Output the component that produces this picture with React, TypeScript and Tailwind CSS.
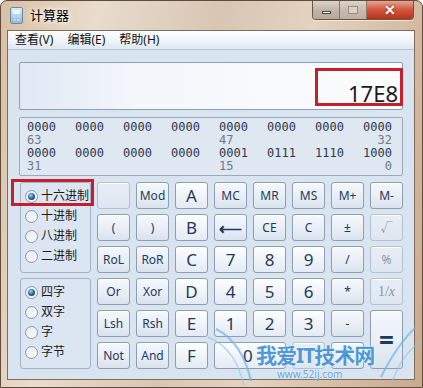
import React from "react";

type Kind = "op" | "num" | "off";

const FONT = "font-['Noto_Sans','Noto_Sans_CJK_SC',sans-serif]";

function Key({
	label,
	kind = "op",
	className = "",
}: {
	label: React.ReactNode;
	kind?: Kind;
	className?: string;
}) {
	const look =
		kind === "num"
			? "bg-[linear-gradient(to_bottom,#fdfeff,#f0f4f9_50%,#e4ebf4)] border-[#8e9db2] text-[17px] text-[#1e395b]"
			: kind === "off"
				? "bg-[linear-gradient(to_bottom,#e8eef6,#dde6f0)] border-[#b3c1d2] text-[12px] text-[#8795a8]"
				: "bg-[linear-gradient(to_bottom,#f5f8fc,#e9eff6_50%,#d9e3ee)] border-[#8e9db2] text-[12px] text-[#1e395b]";
	return (
		<div
			className={`flex items-center justify-center rounded-[3px] border leading-none shadow-[inset_0_1px_0_#ffffff] ${look} ${className}`}
		>
			{label}
		</div>
	);
}

function Radio({ label, on = false }: { label: string; on?: boolean }) {
	return (
		<div className="flex h-[20px] items-center gap-[3px] pl-[4px]">
			<span className="flex size-[13px] shrink-0 items-center justify-center rounded-full border border-[#8a99ac] bg-[linear-gradient(135deg,#e6e9ee,#fcfcfd)]">
				{on && (
					<span className="size-[7px] rounded-full bg-[radial-gradient(circle_at_40%_35%,#9ad6f7,#1f5f93_55%,#0c2f52)]" />
				)}
			</span>
			<span className="whitespace-nowrap text-[12px] leading-none text-[#1b1b1b]">{label}</span>
		</div>
	);
}

function RadioGroup({ items, className = "" }: { items: [string, boolean][]; className?: string }) {
	return (
		<div
			className={`flex flex-col justify-center rounded-[3px] border border-[#a3b2c6] bg-[#dce6f2] pb-[3px] ${className}`}
		>
			{items.map(([t, on]) => (
				<Radio key={t} label={t} on={on} />
			))}
		</div>
	);
}

function Bits() {
	const rows = [
		[["0000", "0000", "0000", "0000", "0000", "0000", "0000", "0000"], ["63", "", "", "", "47", "", "", "32"]],
		[["0000", "0000", "0000", "0000", "0001", "0111", "1110", "1000"], ["31", "", "", "", "15", "", "", "0"]],
	];
	return (
		<div className="mt-[7px] h-[59px] rounded-[2px] border border-[#9aa9bd] bg-[#dfe7f1] pl-[7px] pr-[10px] pt-[3px] font-['DejaVu_Sans_Mono',monospace] text-[12px] leading-[13px]">
			{rows.map(([bits, labels], r) => (
				<div key={r}>
					<div className="flex justify-between text-[#2b3a4c]">
						{bits.map((b, i) => (
							<span key={i} className="w-[29px]">
								{b}
							</span>
						))}
					</div>
					<div className="flex justify-between text-[#6f7986]">
						{labels.map((b, i) => (
							<span key={i} className={`w-[29px] ${i === 7 ? "text-right" : ""}`}>
								{b}
							</span>
						))}
					</div>
				</div>
			))}
		</div>
	);
}

function Keys() {
	return (
		<div className="mt-[6px] grid grid-cols-[72px_repeat(8,33px)] grid-rows-[repeat(6,27px)] gap-x-[6px] gap-y-[5px]">
			<RadioGroup
				className="row-span-3 ml-px"
				items={[
					["十六进制", true],
					["十进制", false],
					["八进制", false],
					["二进制", false],
				]}
			/>
			<Key label="" kind="off" />
			<Key label="Mod" />
			<Key label="A" kind="num" />
			<Key label="MC" />
			<Key label="MR" />
			<Key label="MS" />
			<Key label="M+" />
			<Key label="M-" />

			<Key label="(" />
			<Key label=")" />
			<Key label="B" kind="num" />
			<Key label={<span className="text-[16px] font-bold">⟵</span>} />
			<Key label="CE" />
			<Key label="C" />
			<Key label="±" />
			<Key label="√" kind="off" />

			<Key label="RoL" />
			<Key label="RoR" />
			<Key label="C" kind="num" />
			<Key label="7" kind="num" />
			<Key label="8" kind="num" />
			<Key label="9" kind="num" />
			<Key label="/" />
			<Key label="%" kind="off" />

			<RadioGroup
				className="row-span-3 ml-px"
				items={[
					["四字", true],
					["双字", false],
					["字", false],
					["字节", false],
				]}
			/>
			<Key label="Or" />
			<Key label="Xor" />
			<Key label="D" kind="num" />
			<Key label="4" kind="num" />
			<Key label="5" kind="num" />
			<Key label="6" kind="num" />
			<Key label="*" />
			<Key label={<span className="font-['Liberation_Serif',serif] text-[14px]">1/<i>x</i></span>} kind="off" />

			<Key label="Lsh" />
			<Key label="Rsh" />
			<Key label="E" kind="num" />
			<Key label="1" kind="num" />
			<Key label="2" kind="num" />
			<Key label="3" kind="num" />
			<Key label="-" />
			<Key label={<span className="text-[26px] font-bold">=</span>} className="row-span-2" />

			<Key label="Not" />
			<Key label="And" />
			<Key label="F" kind="num" />
			<Key label={<span className="mr-auto pl-[28px]">0</span>} kind="num" className="col-span-2" />
			<Key label="." kind="off" />
			<Key label="+" />
		</div>
	);
}

function TitleBar() {
	return (
		<div className="flex h-[29px] items-start">
			<div className="ml-[9px] mt-[6px] flex h-[17px] w-[13px] flex-col gap-[1px] rounded-[2px] border border-[#6d8aa5] bg-[linear-gradient(to_bottom,#d9ecf8,#8fb7d6)] p-[2px]">
				<div className="h-[4px] rounded-[1px] bg-[#eef7fd]" />
				<div className="grid flex-1 grid-cols-2 gap-[1px]">
					<div className="bg-[#b9d6ea]" />
					<div className="bg-[#b9d6ea]" />
					<div className="bg-[#b9d6ea]" />
					<div className="bg-[#b9d6ea]" />
				</div>
			</div>
			<div className="ml-[7px] mt-[6px] text-[13px] leading-[16px] text-black [text-shadow:0_0_8px_#fff,0_0_4px_#fff]">
				计算器
			</div>
			<div className="ml-auto mr-[8px] flex h-[19px] overflow-hidden rounded-b-[4px] border border-t-0 border-[#6a5646] shadow-[0_1px_0_#f2e6d8]">
				<div className="flex w-[27px] items-center justify-center border-r border-[#8a7765] bg-[linear-gradient(to_bottom,#dcd2c8,#c2b4a6_50%,#b7a898)]">
					<div className="mt-[4px] h-[3px] w-[9px] border border-[#4a4036] bg-white" />
				</div>
				<div className="flex w-[27px] items-center justify-center border-r border-[#8a7765] bg-[linear-gradient(to_bottom,#ddd3ca,#c8bbae_50%,#bdae9f)]">
					<div className="h-[8px] w-[10px] border border-[#9a8d80] bg-[#d9d0c6]" />
				</div>
				<div className="flex w-[46px] items-center justify-center bg-[linear-gradient(to_bottom,#e8a491,#d0553c_50%,#b8321c)]">
					<span className="text-[14px] font-bold leading-none text-white [text-shadow:0_0_2px_#6b1a0c]">✕</span>
				</div>
			</div>
		</div>
	);
}

function Watermark() {
	return (
		<div className="pointer-events-none absolute left-[205px] top-[318px] h-[70px] w-[218px]">
			<svg className="absolute inset-0" width="218" height="70" viewBox="0 0 218 70" fill="none">
				<path d="M10 10 C 30 20, 40 40, 45 62" stroke="#6fb3e6" strokeWidth="2" opacity="0.7" />
				<path d="M2 18 C 25 28, 32 45, 38 66" stroke="#8cc4ec" strokeWidth="1.5" opacity="0.6" />
				<path d="M210 8 C 195 22, 185 38, 175 58" stroke="#6fb3e6" strokeWidth="2" opacity="0.7" />
				<path d="M218 20 C 200 32, 192 46, 185 66" stroke="#8cc4ec" strokeWidth="1.5" opacity="0.6" />
			</svg>
			<div className="absolute left-[50px] top-[26px] text-[21px] font-bold leading-none tracking-[-1px] text-[#3f8fd6] opacity-90 [text-shadow:0_0_2px_#fff,0_0_2px_#fff]">
				我爱IT技术网
			</div>
			<div className="absolute left-[71px] top-[50px] text-[10px] leading-none text-[#4d9ad9] opacity-85 [text-shadow:0_0_2px_#fff]">
				www.52ij.com
			</div>
		</div>
	);
}

export default function App() {
	return (
		<div
			className={`relative h-[388px] w-[423px] overflow-hidden rounded-t-[7px] border border-[#5e4c3c] bg-[linear-gradient(100deg,#d9bfa3,#e9dccd_20%,#d8c6b3_45%,#e3d3c1_65%,#caa98a)] ${FONT}`}
		>
			<TitleBar />
			<div className="ml-[6px] mr-[7px] flex h-[350px] flex-col border border-[#7f6c5b] bg-[#d9e4f1]">
				<div className="flex h-[19px] items-center gap-[14px] border-b border-[#b7c5d6] bg-[linear-gradient(to_bottom,#fdfeff,#eef3f9_60%,#dde6f1)] pl-[7px] text-[12px] text-[#111]">
					<span>查看(V)</span>
					<span>编辑(E)</span>
					<span>帮助(H)</span>
				</div>
				<div className="flex flex-1 flex-col px-[11px] pt-[12px]">
					<div className="flex h-[48px] items-end justify-end rounded-[2px] border border-[#8f9fb4] bg-[linear-gradient(to_right,#dfe8f4,#f4f7fb_30%,#fbfcfe)] pb-[5px] pr-[4px]">
						<span className="text-[22px] leading-none text-[#1a1a1a]">17E8</span>
					</div>
					<Bits />
					<Keys />
				</div>
			</div>
			<div className="pointer-events-none absolute left-[314px] top-[67px] h-[38px] w-[88px] border-[3px] border-[#c4202c]" />
			<div className="pointer-events-none absolute left-[10px] top-[178px] h-[27px] w-[83px] border-[3px] border-[#c4202c]" />
			<Watermark />
		</div>
	);
}
